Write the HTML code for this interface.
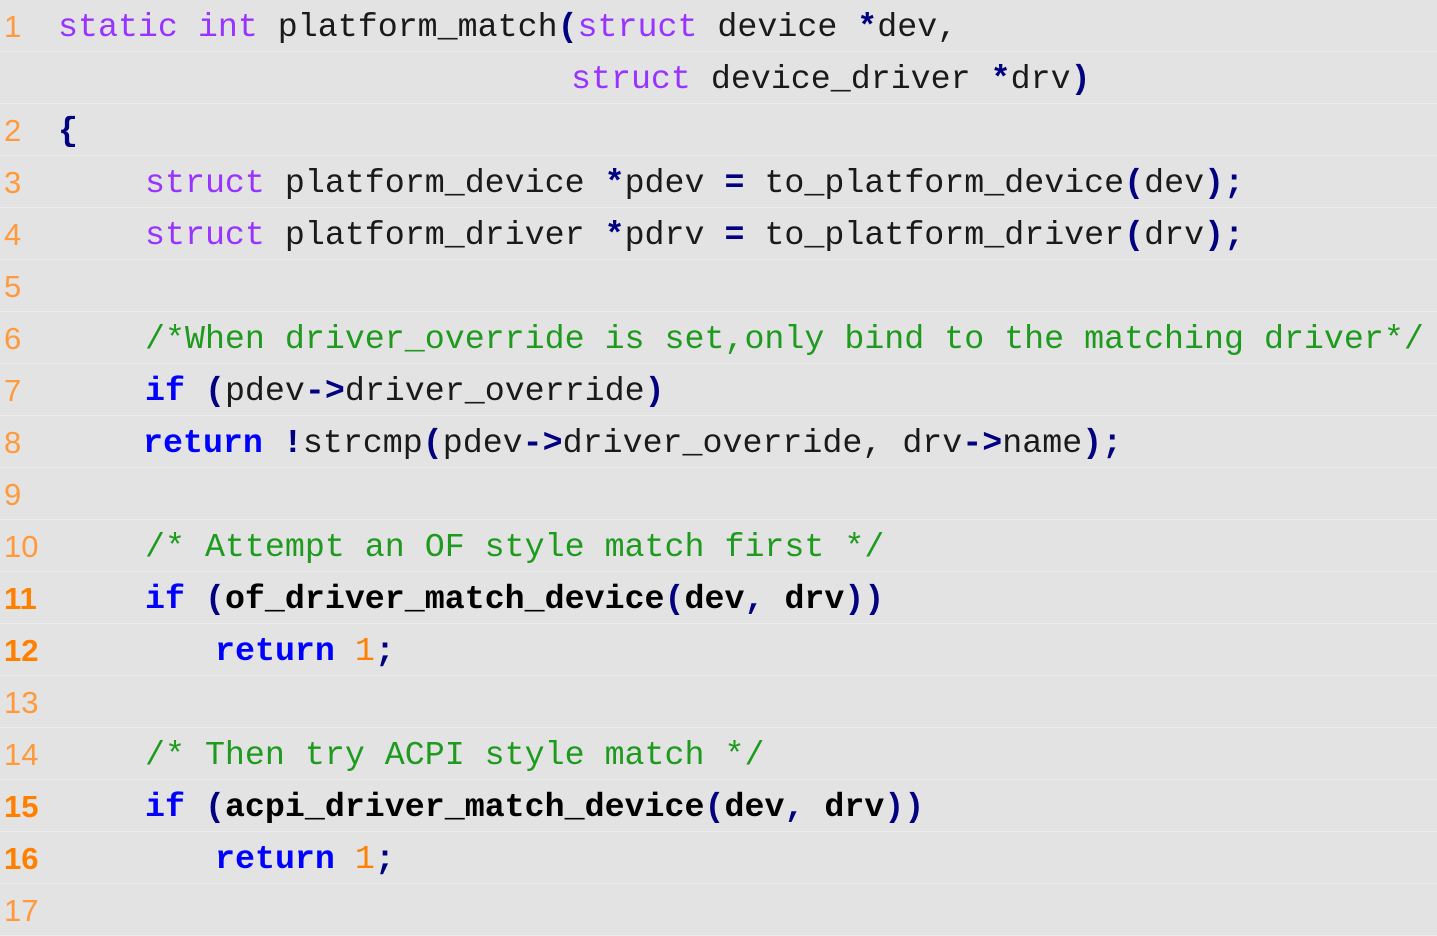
<!DOCTYPE html>
<html><head><meta charset="utf-8"><style>
html,body{margin:0;padding:0;background:#e3e3e3;width:1437px;height:929px;overflow:hidden;}
.r{position:absolute;left:0;width:1437px;height:52px;border-bottom:1px solid #ececec;box-sizing:border-box;}
.n{position:absolute;left:4px;top:2px;line-height:50px;font-family:"Liberation Sans",sans-serif;font-size:31px;color:#ff9a3c;}
.n.b{font-weight:bold;color:#ff8000;}
.c{position:absolute;top:2px;line-height:50px;font-family:"Liberation Mono",monospace;font-size:33.3px;color:#1a1a1a;white-space:pre;}
.p{color:#9933ff}
.k{color:#0000ff;font-weight:bold}
.o{color:#000080;font-weight:bold}
.g{color:#1e9a1e}
.num{color:#ff8000}
.bb{font-weight:bold;color:#000}
</style></head><body>
<div class="r" style="top:0"><span class="n">1</span><span class="c" style="left:58px"><span class="p">static int</span> platform_match<span class="o">(</span><span class="p">struct</span> device <span class="o">*</span>dev,</span></div>
<div class="r" style="top:52px"><span class="c" style="left:571px"><span class="p">struct</span> device_driver <span class="o">*</span>drv<span class="o">)</span></span></div>
<div class="r" style="top:104px"><span class="n">2</span><span class="c" style="left:58px"><span class="o">{</span></span></div>
<div class="r" style="top:156px"><span class="n">3</span><span class="c" style="left:145px"><span class="p">struct</span> platform_device <span class="o">*</span>pdev <span class="o">=</span> to_platform_device<span class="o">(</span>dev<span class="o">);</span></span></div>
<div class="r" style="top:208px"><span class="n">4</span><span class="c" style="left:145px"><span class="p">struct</span> platform_driver <span class="o">*</span>pdrv <span class="o">=</span> to_platform_driver<span class="o">(</span>drv<span class="o">);</span></span></div>
<div class="r" style="top:260px"><span class="n">5</span></div>
<div class="r" style="top:312px"><span class="n">6</span><span class="c g" style="left:145px">/*When driver_override is set,only bind to the matching driver*/</span></div>
<div class="r" style="top:364px"><span class="n">7</span><span class="c" style="left:145px"><span class="k">if</span> <span class="o">(</span>pdev<span class="o">-&gt;</span>driver_override<span class="o">)</span></span></div>
<div class="r" style="top:416px"><span class="n">8</span><span class="c" style="left:143px"><span class="k">return</span> <span class="o">!</span>strcmp<span class="o">(</span>pdev<span class="o">-&gt;</span>driver_override, drv<span class="o">-&gt;</span>name<span class="o">);</span></span></div>
<div class="r" style="top:468px"><span class="n">9</span></div>
<div class="r" style="top:520px"><span class="n">10</span><span class="c g" style="left:145px">/* Attempt an OF style match first */</span></div>
<div class="r" style="top:572px"><span class="n b">11</span><span class="c" style="left:145px"><span class="k">if</span> <span class="o">(</span><span class="bb">of_driver_match_device</span><span class="o">(</span><span class="bb">dev</span><span class="o">,</span> <span class="bb">drv</span><span class="o">))</span></span></div>
<div class="r" style="top:624px"><span class="n b">12</span><span class="c" style="left:215px"><span class="k">return</span> <span class="num">1</span><span class="o">;</span></span></div>
<div class="r" style="top:676px"><span class="n">13</span></div>
<div class="r" style="top:728px"><span class="n">14</span><span class="c g" style="left:145px">/* Then try ACPI style match */</span></div>
<div class="r" style="top:780px"><span class="n b">15</span><span class="c" style="left:145px"><span class="k">if</span> <span class="o">(</span><span class="bb">acpi_driver_match_device</span><span class="o">(</span><span class="bb">dev</span><span class="o">,</span> <span class="bb">drv</span><span class="o">))</span></span></div>
<div class="r" style="top:832px"><span class="n b">16</span><span class="c" style="left:215px"><span class="k">return</span> <span class="num">1</span><span class="o">;</span></span></div>
<div class="r" style="top:884px"><span class="n">17</span></div>
</body></html>
